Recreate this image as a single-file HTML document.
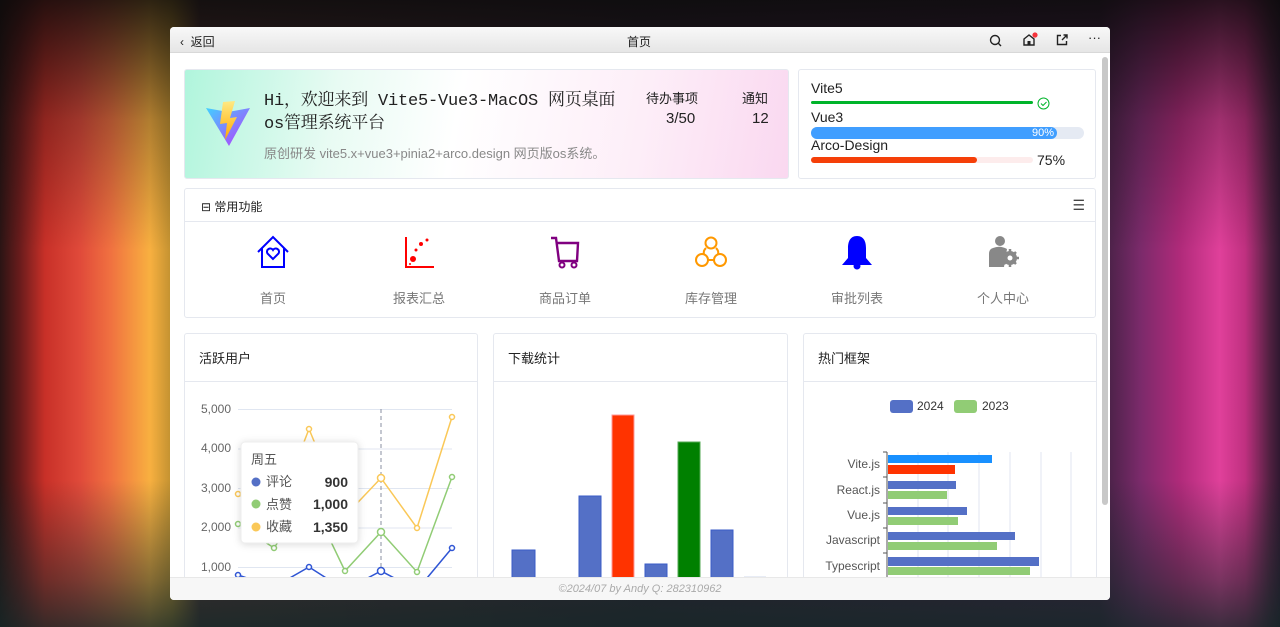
<!DOCTYPE html>
<html><head><meta charset="utf-8"><style>
*{margin:0;padding:0;box-sizing:border-box}
body{width:1280px;height:627px;overflow:hidden;position:relative;font-family:"Liberation Sans","Noto Sans CJK SC",sans-serif;
background:linear-gradient(90deg,#2a1414 0,#6a1c1c 20px,#c83028 45px,#e04a3a 80px,#f07040 110px,#f8b040 150px,#c09030 172px,#503030 200px,#302030 640px,#402040 1100px,#7a2a6a 1140px,#b02a7a 1180px,#e0409a 1220px,#c03080 1245px,#502040 1270px,#301830 1280px)}
.shade{position:absolute;inset:0;background:linear-gradient(180deg,rgba(10,10,10,.85) 0,rgba(10,10,10,.3) 120px,rgba(0,0,0,0) 250px,rgba(0,0,0,0) 480px,rgba(20,40,40,.5) 580px,rgba(20,40,40,.8) 627px)}
.win{position:absolute;left:170px;top:27px;width:940px;height:573px;background:#fff;border-radius:4px;overflow:hidden}
.title{height:26px;background:linear-gradient(#f8f8f8,#e6e6e6);border-bottom:1px solid #d8d8d8;position:relative;font-size:12px;color:#222}
.card{position:absolute;background:#fff;border:1px solid #e5e8ef;border-radius:3px}
.abs{position:absolute}
.foot{position:absolute;left:0;top:550px;width:940px;height:23px;background:#f7f7f7;border-top:1px solid #e8e8e8;text-align:center;font-size:11px;font-style:italic;color:#aaa;line-height:22px}
.ch{height:48px;border-bottom:1px solid #e5e8ef;font-size:13px;color:#222;padding:14px 0 0 14px}
.fi{position:absolute;top:45px;width:120px;text-align:center;font-size:13px;color:#777}
.fi svg{display:block;margin:0 auto 18px}
</style></head><body><div class="shade"></div>
<div class="win">
<div class="title">
<span class="abs" style="left:10px;top:6px">‹&nbsp; 返回</span>
<span class="abs" style="left:457px;top:6px">首页</span>
<svg class="abs" style="left:819px;top:7px" width="13" height="13"><circle cx="6" cy="6" r="4.5" fill="none" stroke="#222" stroke-width="1.4"/><path d="M9.3 9.3 12 12" stroke="#222" stroke-width="1.4"/></svg>
<svg class="abs" style="left:852px;top:5px" width="16" height="16"><path d="M2 7 7 3 12 7V13H2Z" fill="none" stroke="#222" stroke-width="1.4"/><rect x="5.5" y="9" width="3" height="4" fill="#222"/><circle cx="13" cy="3" r="2.6" fill="#f5343c"/></svg>
<svg class="abs" style="left:886px;top:7px" width="12" height="12"><path d="M5 1.5H1.5V10.5H10.5V7M6 6 11 1M7.5 1H11V4.5" fill="none" stroke="#222" stroke-width="1.4"/></svg>
<span class="abs" style="left:918px;top:3px;font-size:13px">···</span>
</div>
<div class="abs" style="left:932px;top:30px;width:6px;height:448px;background:#c8c8c8;border-radius:3px"></div>

<div class="card" style="left:14px;top:42px;width:605px;height:110px;background:linear-gradient(100deg,#b0f5dc 0,#e8fbf3 25%,#fff 45%,#fdeef8 75%,#fad8f0 100%)">
<svg class="abs" style="left:20px;top:30px" width="46" height="48" viewBox="0 0 46 48"><defs><linearGradient id="v1" x1="0" y1="0" x2="1" y2="1"><stop offset="0" stop-color="#41d1ff"/><stop offset="1" stop-color="#bd34fe"/></linearGradient><linearGradient id="v2" x1="0" y1="0" x2="0" y2="1"><stop offset="0" stop-color="#ffea83"/><stop offset="1" stop-color="#ffa800"/></linearGradient></defs><path d="M1 8 23 12 45 8 24 46Z" fill="url(#v1)"/><path d="M18 2 30 1 25 18 32 17 20 40 22 23 15 24Z" fill="url(#v2)"/></svg>
<div class="abs" style="left:79px;top:20px;font-family:'Liberation Mono','Noto Serif CJK SC',serif;font-size:17px;line-height:23px;color:#222;width:360px;letter-spacing:-0.2px">Hi，欢迎来到 Vite5-Vue3-MacOS 网页桌面os管理系统平台</div>
<div class="abs" style="left:79px;top:73px;font-size:13px;color:#888">原创研发 vite5.x+vue3+pinia2+arco.design 网页版os系统。</div>
<div class="abs" style="left:461px;top:18px;font-size:13px;color:#222">待办事项</div>
<div class="abs" style="left:481px;top:40px;font-size:15px;color:#222">3/50</div>
<div class="abs" style="left:557px;top:18px;font-size:13px;color:#222">通知</div>
<div class="abs" style="left:567px;top:40px;font-size:15px;color:#222">12</div>
</div>

<div class="card" style="left:628px;top:42px;width:298px;height:110px;font-size:14px;color:#222">
<div class="abs" style="left:12px;top:10px">Vite5</div>
<div class="abs" style="left:12px;top:31px;width:222px;height:3px;background:#00b42a;border-radius:2px"></div>
<svg class="abs" style="left:238px;top:27px" width="13" height="13"><circle cx="6.5" cy="6.5" r="5.5" fill="none" stroke="#00b42a"/><path d="M4 6.5 6 8.5 9.5 5" fill="none" stroke="#00b42a"/></svg>
<div class="abs" style="left:12px;top:39px">Vue3</div>
<div class="abs" style="left:12px;top:57px;width:273px;height:12px;background:#e5eaf3;border-radius:6px"><div style="width:246px;height:12px;background:#409eff;border-radius:6px;color:#fff;font-size:11px;text-align:right;padding-right:3px;line-height:12px">90%</div></div>
<div class="abs" style="left:12px;top:67px">Arco-Design</div>
<div class="abs" style="left:12px;top:87px;width:222px;height:6px;background:#fdecec;border-radius:3px"><div style="width:166px;height:6px;background:#f53f08;border-radius:3px"></div></div>
<div class="abs" style="left:238px;top:82px">75%</div>
</div>

<div class="card" style="left:14px;top:161px;width:912px;height:130px">
<div style="height:33px;border-bottom:1px solid #e5e8ef;font-size:12px;color:#222;padding:9px 0 0 16px">⊟ 常用功能</div>
<div class="abs" style="right:10px;top:8px;font-size:14px;color:#444">☰</div>
<div class="fi" style="left:28px"><svg width="36" height="36" viewBox="0 0 36 36"><path d="M3 18 18 3 33 18M7 14V33H29V14" fill="none" stroke="#0000ff" stroke-width="2"/><path d="M18 25 12.5 19.5A3 3 0 0 1 18 16A3 3 0 0 1 23.5 19.5Z" fill="none" stroke="#0000ff" stroke-width="2"/></svg>首页</div>
<div class="fi" style="left:174px"><svg width="36" height="36" viewBox="0 0 36 36"><path d="M5 3V33H33" fill="none" stroke="#f00" stroke-width="2"/><circle cx="12" cy="25" r="3" fill="#f00"/><circle cx="20" cy="10" r="2" fill="#f00"/><circle cx="26" cy="6" r="1.5" fill="#f00"/><circle cx="15" cy="16" r="1.5" fill="#f00"/><circle cx="9" cy="30" r="1" fill="#f00"/></svg>报表汇总</div>
<div class="fi" style="left:320px"><svg width="36" height="36" viewBox="0 0 36 36"><path d="M4 4H9L12 27H30L31 9H10" fill="none" stroke="#800080" stroke-width="2.4"/><circle cx="15" cy="31" r="2.5" fill="none" stroke="#800080" stroke-width="2"/><circle cx="27" cy="31" r="2.5" fill="none" stroke="#800080" stroke-width="2"/></svg>商品订单</div>
<div class="fi" style="left:466px"><svg width="36" height="36" viewBox="0 0 36 36"><circle cx="18" cy="9" r="5.5" fill="none" stroke="#ff9800" stroke-width="2"/><circle cx="9" cy="26" r="6" fill="none" stroke="#ff9800" stroke-width="2"/><circle cx="27" cy="26" r="6" fill="none" stroke="#ff9800" stroke-width="2"/><path d="M13 14Q10 17 11 20M23 14Q26 17 25 20M15 26H21" fill="none" stroke="#ff9800" stroke-width="2"/></svg>库存管理</div>
<div class="fi" style="left:612px"><svg width="36" height="36" viewBox="0 0 36 36"><path d="M18 2C11 2 9 8 9 14V24L3 31H33L27 24V14C27 8 25 2 18 2Z" fill="#0000ff"/><circle cx="18" cy="32" r="3.5" fill="#0000ff"/></svg>审批列表</div>
<div class="fi" style="left:758px"><svg width="36" height="36" viewBox="0 0 36 36"><circle cx="15" cy="7" r="5" fill="#888"/><path d="M8 14Q15 11 22 15L19 33H4V20Q4 15 8 14Z" fill="#888"/><circle cx="25" cy="24" r="7" fill="#888"/><path d="M25 15V33M16 24H34M19 18 31 30M31 18 19 30" stroke="#888" stroke-width="2.5"/><circle cx="25" cy="24" r="2.5" fill="#fff"/></svg>个人中心</div>
</div>

<div class="card" style="left:14px;top:306px;width:294px;height:300px"><div class="ch">活跃用户</div></div>
<div class="card" style="left:323px;top:306px;width:295px;height:300px"><div class="ch">下载统计</div></div>
<div class="card" style="left:633px;top:306px;width:294px;height:300px"><div class="ch">热门框架</div></div>

<svg class="abs" style="left:0;top:0" width="940" height="573" viewBox="170 27 940 573">
<g font-size="12" fill="#666" text-anchor="end" font-family="Liberation Sans,sans-serif">
<text x="231" y="413">5,000</text><text x="231" y="452">4,000</text><text x="231" y="492">3,000</text><text x="231" y="531">2,000</text><text x="231" y="571">1,000</text></g>
<g stroke="#e0e6f1"><path d="M238 409.5H452M238 449H452M238 488.5H452M238 528H452M238 567.5H452"/></g>
<path d="M381 409V580" stroke="#8a8fa0" stroke-dasharray="4 3"/>
<polyline fill="none" stroke="#fac858" stroke-width="1.5" points="238,494 274,520 309,429 345,516 381,478 417,528 452,417"/>
<polyline fill="none" stroke="#91cc75" stroke-width="1.5" points="238,524 274,548 309,496 345,571 381,532 417,572 452,477"/>
<polyline fill="none" stroke="#2f55d4" stroke-width="1.5" points="238,575 274,587 309,567 345,590 381,571 417,590 452,548"/>
<g fill="#fff" stroke-width="1.5"><g stroke="#fac858"><circle cx="238" cy="494" r="2.5"/><circle cx="309" cy="429" r="2.5"/><circle cx="381" cy="478" r="3.5"/><circle cx="417" cy="528" r="2.5"/><circle cx="452" cy="417" r="2.5"/></g>
<g stroke="#91cc75"><circle cx="238" cy="524" r="2.5"/><circle cx="274" cy="548" r="2.5"/><circle cx="345" cy="571" r="2.5"/><circle cx="381" cy="532" r="3.5"/><circle cx="417" cy="572" r="2.5"/><circle cx="452" cy="477" r="2.5"/></g>
<g stroke="#2f55d4"><circle cx="238" cy="575" r="2.5"/><circle cx="309" cy="567" r="2.5"/><circle cx="381" cy="571" r="3.5"/><circle cx="452" cy="548" r="2.5"/></g></g>
<rect x="241" y="442" width="117" height="101" rx="4" fill="#fff" stroke="#eee" style="filter:drop-shadow(0 1px 4px rgba(0,0,0,.15))"/>
<g font-size="13" fill="#555" font-family="Liberation Sans,Noto Sans CJK SC,sans-serif"><text x="251" y="464">周五</text>
<circle cx="256" cy="482" r="4.5" fill="#5470c6"/><text x="266" y="486">评论</text>
<circle cx="256" cy="504" r="4.5" fill="#91cc75"/><text x="266" y="509">点赞</text>
<circle cx="256" cy="527" r="4.5" fill="#fac858"/><text x="266" y="531">收藏</text>
<g font-weight="bold" fill="#333" text-anchor="end" font-size="14"><text x="348" y="487">900</text><text x="348" y="509">1,000</text><text x="348" y="532">1,350</text></g></g>
<rect x="512" y="550" width="23" height="40" fill="#5470c6" stroke="#3a5bc7"/>
<rect x="579" y="496" width="22" height="90" fill="#5470c6" stroke="#3a5bc7"/>
<rect x="612" y="415" width="22" height="170" fill="#ff3300" stroke="#f99"/>
<rect x="645" y="564" width="22" height="30" fill="#5470c6" stroke="#3a5bc7"/>
<rect x="678" y="442" width="22" height="150" fill="#008000" stroke="#5a5"/>
<rect x="711" y="530" width="22" height="60" fill="#5470c6" stroke="#3a5bc7"/>
<rect x="744" y="576" width="22" height="10" fill="#e8ecf5"/>
<rect x="890" y="400" width="23" height="13" rx="3" fill="#5470c6"/><text x="917" y="410" font-size="12" fill="#333">2024</text>
<rect x="954" y="400" width="23" height="13" rx="3" fill="#91cc75"/><text x="982" y="410" font-size="12" fill="#333">2023</text>
<g stroke="#e0e6f1"><path d="M918 452V590M948 452V590M979 452V590M1010 452V590M1041 452V590M1071 452V590"/></g>
<path d="M887 452V590M883 452H887M883 477H887M883 503H887M883 528H887M883 553H887" stroke="#555"/>
<g font-size="12" fill="#555" text-anchor="end"><text x="880" y="468">Vite.js</text><text x="880" y="494">React.js</text><text x="880" y="519">Vue.js</text><text x="880" y="544">Javascript</text><text x="880" y="570">Typescript</text></g>
<rect x="888" y="455" width="104" height="8" fill="#1890ff"/><rect x="888" y="465" width="67" height="9" fill="#ff3300"/>
<rect x="888" y="481" width="68" height="8" fill="#5470c6"/><rect x="888" y="491" width="59" height="8" fill="#91cc75"/>
<rect x="888" y="507" width="79" height="8" fill="#5470c6"/><rect x="888" y="517" width="70" height="8" fill="#91cc75"/>
<rect x="888" y="532" width="127" height="8" fill="#5470c6"/><rect x="888" y="542" width="109" height="8" fill="#91cc75"/>
<rect x="888" y="557" width="151" height="9" fill="#5470c6"/><rect x="888" y="567" width="142" height="8" fill="#91cc75"/>
</svg>
<div class="foot">©2024/07 by Andy Q: 282310962</div>
</div>
</body></html>
